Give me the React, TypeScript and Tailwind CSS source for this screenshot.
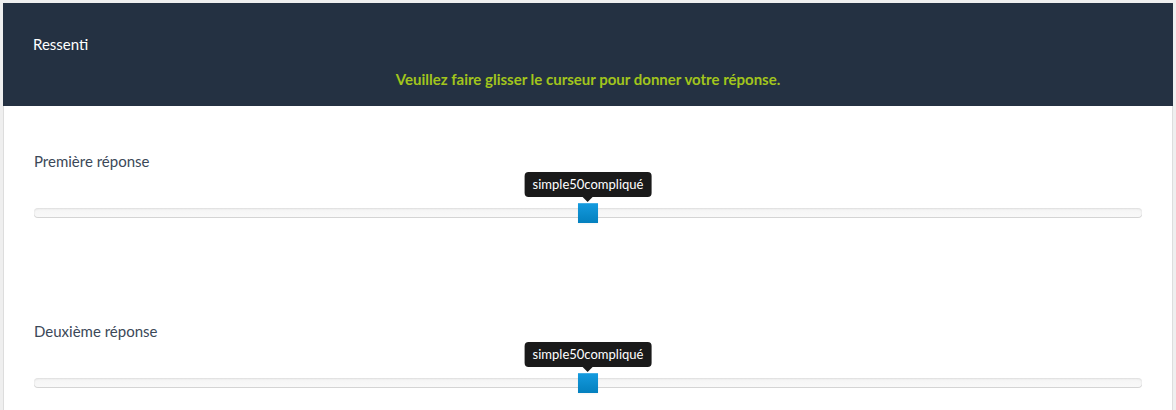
const questions = [
  { id: 1, label: "Première réponse", left: "simple", right: "compliqué", value: 50 },
  { id: 2, label: "Deuxième réponse", left: "simple", right: "compliqué", value: 50 },
];

function SliderRow({ label, left, right, value }: { label: string; left: string; right: string; value: number }) {
  return (
    <div className="pb-[103px]">
      <p className="text-[15px] leading-[20px] text-[#3b4858]">{label}</p>
      <div className="relative mt-[37px] h-[10px] rounded-[4px] bg-gradient-to-b from-[#f5f5f5] to-[#f9f9f9] shadow-[inset_0_1px_2px_rgba(0,0,0,0.1),inset_0_-1px_0_rgba(0,0,0,0.14)]">
        <div
          className="absolute top-[-36px] -translate-x-1/2 flex flex-col items-center"
          style={{ left: `${value}%` }}
        >
          <div className="rounded-[4px] bg-[#1a1a1a] px-[8px] h-[25px] flex items-center text-[13px] text-white whitespace-nowrap">
            {left}
            {value}
            {right}
          </div>
          <div className="h-0 w-0 border-x-[5px] border-t-[5px] border-x-transparent border-t-[#1a1a1a]" />
        </div>
        <div
          className="absolute top-[-5px] h-[20px] w-[20px] -translate-x-1/2 bg-gradient-to-b from-[#149bdf] to-[#0480be] shadow-[inset_0_1px_0_rgba(255,255,255,0.2),0_1px_2px_rgba(0,0,0,0.05)]"
          style={{ left: `${value}%` }}
        />
      </div>
    </div>
  );
}

export default function App() {
  return (
    <div className="min-h-screen bg-[#efefef] pt-[3px] px-[3px] font-['Lato','Liberation_Sans',sans-serif]">
      <div className="bg-white">
        <div className="bg-[#243142] pt-[31px] pb-[17px] px-[30px]">
          <h1 className="text-[15px] leading-[20px] text-white">Ressenti</h1>
          <p className="mt-[15px] text-center text-[15px] leading-[20px] font-bold text-[#a2c51c]">
            Veuillez faire glisser le curseur pour donner votre réponse.
          </p>
        </div>
        <div className="border-x border-[#dddddd] px-[30px] pt-[45px]">
          {questions.map((q) => (
            <SliderRow key={q.id} label={q.label} left={q.left} right={q.right} value={q.value} />
          ))}
        </div>
      </div>
    </div>
  );
}
